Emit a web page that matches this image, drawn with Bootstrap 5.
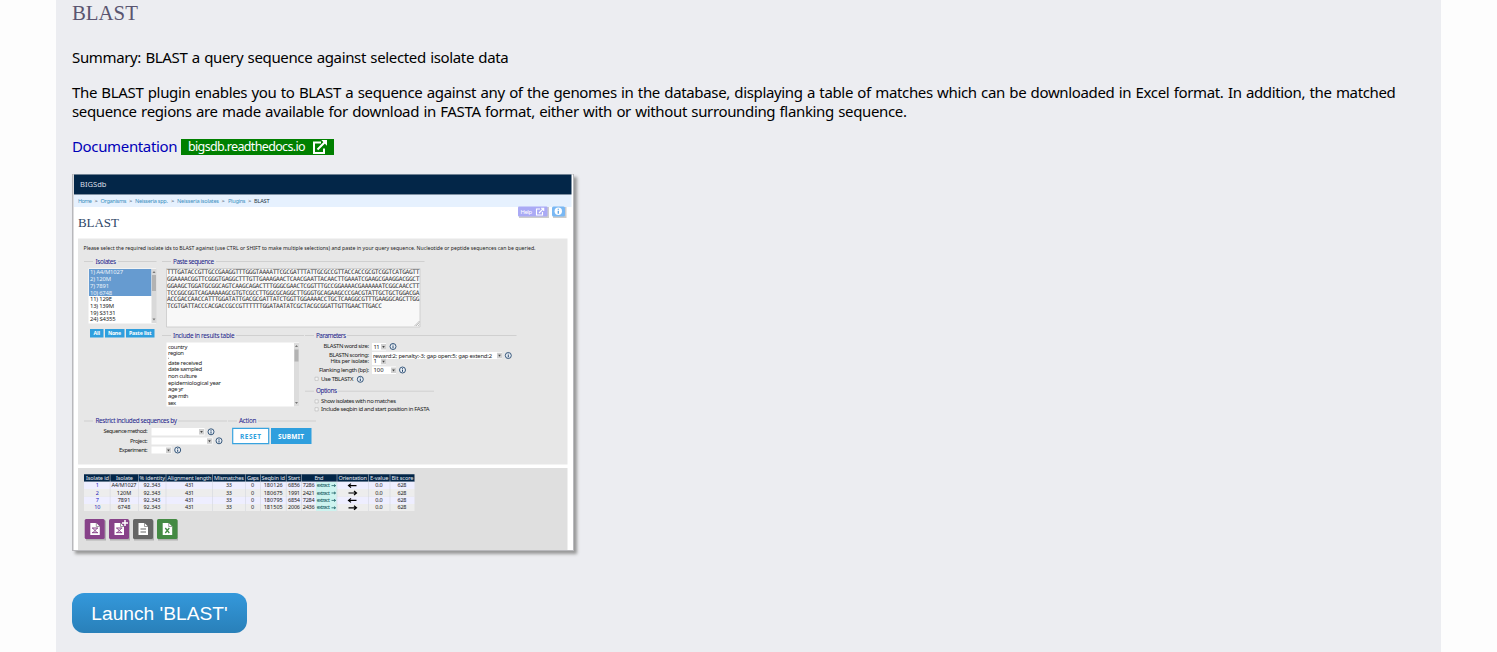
<!DOCTYPE html>
<html lang="en">
<head>
<meta charset="utf-8">
<meta name="viewport" content="width=device-width, initial-scale=1">
<title>BLAST</title>
<link href="https://cdn.jsdelivr.net/npm/bootstrap@5.3.0/dist/css/bootstrap.min.css" rel="stylesheet">
<style>
body{background:#fdfdfd;color:#000;font-family:"Noto Sans","Open Sans",sans-serif;font-size:15px;line-height:19px;letter-spacing:-.35px;word-spacing:.8px;overflow:hidden}
.panel{background:#ecedf1;margin:0 56px;padding:0 16px;height:652px}
h1{font:20.8px/26px "Liberation Serif",serif;color:#5a5570;letter-spacing:0;margin:0 0 22px}
.intro{margin-bottom:16px;white-space:nowrap}
.doc-link{color:#0000b8}
.site-tag{background:#008000;color:#fff;width:153px;height:16px;padding:0 7px;font-size:12.5px;line-height:16px;letter-spacing:-.65px}
.site-tag:hover{color:#fff}
.shot{display:block;margin-top:18px;box-shadow:3px 3px 3px #999}
.launch{margin-top:42px;width:175px;height:40px;border-radius:12px;border:0;background:linear-gradient(#3498db,#2980b9);color:#fff;font:19.2px/40px "Liberation Sans",sans-serif;letter-spacing:0;word-spacing:0;padding:1px 0 0}
.mono{font-family:"DejaVu Sans Mono",monospace;font-size:6.2px;fill:#333}
.ttl{fill:#22228a;font-size:6.4px}
</style>
</head>
<body>
<main class="panel">
<h1>BLAST</h1>
<p class="intro">Summary: BLAST a query sequence against selected isolate data</p>
<p class="intro">The BLAST plugin enables you to BLAST a sequence against any of the genomes in the database, displaying a table of matches which can be downloaded in Excel format. In addition, the matched<br>sequence regions are made available for download in FASTA format, either with or without surrounding flanking sequence.</p>
<div class="d-flex align-items-center">
<a class="doc-link text-decoration-none" href="#" style="width:109px">Documentation</a>
<a class="site-tag d-flex align-items-center justify-content-between text-decoration-none" href="#"><span>bigsdb.readthedocs.io</span>
<svg width="14" height="14" viewBox="0 0 14 14" fill="none" stroke="#fff" stroke-width="2"><path d="M8 2.500H1V13h10V8.500M4.500 9.500 12 2"/><path d="M8.300 0H14v5.700z" fill="#fff" stroke="none"/></svg></a>
</div>
<svg class="shot" width="502" height="377" viewBox="72 174 502 377" font-family="Noto Sans, sans-serif" font-size="5.9" letter-spacing="0" word-spacing="0" fill="#222">
<defs>
<g id="info"><circle r="3" fill="#e9eef4" stroke="#24476e" stroke-width=".9"/><path d="M0-.4V1.8M0-1.8V-1" stroke="#24476e" stroke-width="1"/></g>
<g id="arr"><path fill="#d0d0d0" d="M0 0h5v5.500H0z"/><path fill="#444" d="M1.200 2h2.600L2.500 4z"/></g>
<g id="doc"><path fill="#fff" d="M0 0h6l3.500 3.500V12H0z"/><path d="M6 0v3.500h3.500" fill="none" stroke="#777" stroke-width=".7"/></g>
</defs>
<path fill="#b8b8bc" d="M72 174h502v377H72z"/><path fill="#fff" d="M73.500 174.500h499.500v375.500H73.500z"/>
<path fill="#032648" d="M74 174.500h497.500V194H74z"/><path fill="#8192a4" d="M74 194h497.500v1H74z"/><path fill="#e6f1fe" d="M74 195h497.500v12H74z"/>
<text x="80" y="187" font-size="7.600" fill="#d8dfe6" textLength="26.500" lengthAdjust="spacingAndGlyphs">BIGSdb</text>
<g fill="#3c8fc0" font-size="5.600"><text x="78" y="202.700" textLength="14">Home</text><text x="100.500" y="202.700" textLength="26">Organisms</text><text x="135" y="202.700" textLength="33">Neisseria spp.</text><text x="177" y="202.700" textLength="42">Neisseria isolates</text><text x="228" y="202.700" textLength="17.500">Plugins</text><g fill="#234"><text x="94.500" y="202.700">&gt;</text><text x="129" y="202.700">&gt;</text><text x="171" y="202.700">&gt;</text><text x="221.500" y="202.700">&gt;</text><text x="248" y="202.700">&gt;</text><text x="254" y="202.700" textLength="15.500">BLAST</text></g></g>
<path fill="#aaa" opacity=".6" d="M519 207h30v11h-30zM553 207h13.500v11H553z"/>
<rect x="518" y="206.500" width="29.500" height="10" rx="1" fill="#aaaaf5"/><text x="520.500" y="214" fill="#fff" textLength="11.500">Help</text>
<path d="M540 209h-3.500v6h6v-3M539 213l4.500-4.500M541 208.300h2.700v2.700" fill="none" stroke="#fff" stroke-width="1.100"/>
<rect x="552" y="206.500" width="13" height="10" rx="1.500" fill="#79b8f4"/><circle cx="558.300" cy="211.300" r="3.700" fill="#fff"/><path d="M558.300 210.700v3M558.300 208.700v1.100" stroke="#5ba3e6" stroke-width="1.300"/>
<text x="78" y="227" font-family="Liberation Serif, serif" font-size="13" fill="#2e4566" textLength="41">BLAST</text>
<path fill="#e7e7e7" d="M78 238.500h489.500V464.500H78z"/><path fill="#dfdfdf" d="M78 468h489.500v82H78z"/>
<text x="83.500" y="249.700" textLength="452" lengthAdjust="spacingAndGlyphs">Please select the required isolate ids to BLAST against (use CTRL or SHIFT to make multiple selections) and paste in your query sequence. Nucleotide or peptide sequences can be queried.</text>
<path d="M84 261.500h9M118 261.500h38.500M162 261.500h9M216 261.500h208.500M162 335.500h9M236 335.500h68M305 335.500h9M347 335.500h169.500M305 391.200h9M338 391.200h96M84 421h9M178 421h49M228 421h9M258 421h58" stroke="#cacaca" stroke-width=".8"/>
<g class="ttl"><text x="95.500" y="263.500" textLength="20.500">Isolates</text><text x="173" y="263.500" textLength="41">Paste sequence</text><text x="173" y="337.500" textLength="61.500">Include in results table</text><text x="316" y="337.500" textLength="30">Parameters</text><text x="316" y="393" textLength="21">Options</text><text x="95.500" y="423" textLength="81.500">Restrict included sequences by</text><text x="239" y="423" textLength="17.500">Action</text></g>
<path fill="#fff" d="M88.500 268.500H156v55H88.500z"/><path fill="#669bd0" d="M89 269h62.500v27H89z"/><path fill="#d9d9d9" d="M151.500 269h5v54h-5z"/><path fill="#b3b3b3" d="M152 275h4v16h-4z"/>
<path fill="#777" d="M152.500 273l1.500-2 1.500 2zM152.500 318.500l1.500 2 1.500-2z"/>
<g fill="#e9f1f8"><text x="90" y="274.200" textLength="33">1) A4/M1027</text><text x="90" y="281" textLength="21">2) 120M</text><text x="90" y="287.700" textLength="19">7) 7891</text><text x="90" y="294.500" textLength="22">10) 6748</text></g>
<text x="90" y="301.200" textLength="22">11) 129E</text><text x="90" y="308" textLength="24">13) 139M</text><text x="90" y="314.700" textLength="25.500">19) S3131</text><text x="90" y="321.300" textLength="25.500">24) S4355</text>
<path d="M90 329h13.500v8.500H90zM105 329h19.500v8.500H105zM126 329h28.500v8.500H126z" fill="#2f9fde"/>
<g fill="#fff" font-weight="700" font-size="5.200"><text x="93.500" y="335.200" textLength="6.500">All</text><text x="108" y="335.200" textLength="13">None</text><text x="129" y="335.200" textLength="22.500">Paste list</text></g>
<path fill="#f8f8f8" stroke="#c4c4c4" stroke-width=".7" d="M166.500 268.500H420v58.500H166.500z"/><path d="M416 326l3.500-3.500M418 326l1.500-1.500M414.500 326l5-5" stroke="#888" stroke-width=".5"/>
<g class="mono"><text x="167" y="274.200" textLength="252.500">TTTGATACCGTTGCCGAAGGTTTGGGTAAAATTCGCGATTTATTGCGCCGTTACCACCGCGTCGGTCATGAGTT</text><text x="167" y="281" textLength="252.500">GGAAAACGGTTCGGGTGAGGCTTTGTTGAAAGAACTCAACGAATTACAACTTGAAATCGAAGCGAAGGACGGCT</text><text x="167" y="287.800" textLength="252.500">GGAAGCTGGATGCGGCAGTCAAGCAGACTTTGGGCGAACTCGGTTTGCCGGAAAACGAAAAAATCGGCAACCTT</text><text x="167" y="294.500" textLength="252.500">TCCGGCGGTCAGAAAAAGCGTGTCGCCTTGGCGCAGGCTTGGGTGCAGAAGCCCGACGTATTGCTGCTGGACGA</text><text x="167" y="301.200" textLength="252.500">ACCGACCAACCATTTGGATATTGACGCGATTATCTGGTTGGAAAACCTGCTCAAGGCGTTTGAAGGCAGCTTGG</text><text x="167" y="308" textLength="215">TCGTGATTACCCACGACCGCCGTTTTTTGGATAATATCGCTACGCGGATTGTTGAACTTGACC</text></g>
<path fill="#fff" d="M166.500 342.500H299V406.500H166.500z"/><path fill="#dcdcdc" d="M294 343h5v63.500h-5z"/><path fill="#b3b3b3" d="M294.500 349.500h4v12h-4z"/><path fill="#777" d="M295 347l1.500-2 1.500 2zM295 402l1.500 2 1.500-2z"/>
<text x="168" y="348.700" textLength="19.500">country</text><text x="168" y="355.300" textLength="16">region</text><text x="168" y="364.600" textLength="34">date received</text><text x="168" y="371.200" textLength="34">date sampled</text><text x="168" y="378" textLength="29">non culture</text><text x="168" y="384.700" textLength="53">epidemiological year</text><text x="168" y="391.300" textLength="15.500">age yr</text><text x="168" y="398" textLength="20.500">age mth</text><text x="168" y="404.700" textLength="8">sex</text>
<path d="M168 358.300h1" stroke="#555" stroke-width=".6"/>
<text x="323.500" y="348.200" textLength="45.500">BLASTN word size:</text><text x="329" y="357.300" textLength="40">BLASTN scoring:</text><text x="330.500" y="362.500" textLength="38.500">Hits per isolate:</text><text x="319" y="371.700" textLength="50">Flanking length (bp):</text><text x="321" y="380.700" textLength="32.500">Use TBLASTX</text><text x="321" y="403.400" textLength="75">Show isolates with no matches</text><text x="321" y="411.300" textLength="108.500">Include seqbin id and start position in FASTA</text>
<path fill="#fff" d="M372 343h14v7.500h-14zM372 352h130v7h-130zM372 358h14v7h-14zM372 366.500h24v7.500h-24z"/>
<use href="#arr" x="381" y="344"/><use href="#arr" x="497" y="352.800"/><use href="#arr" x="381" y="358.800"/><use href="#arr" x="391" y="367.500"/>
<text x="373.500" y="348.700" textLength="6">11</text><text x="373" y="357.600" textLength="119">reward:2; penalty:-3; gap open:5; gap extend:2</text><text x="373.500" y="363.200">1</text><text x="373.500" y="372.200" textLength="10">100</text>
<use href="#info" x="393" y="346.500"/><use href="#info" x="508.300" y="355.500"/><use href="#info" x="402.500" y="370"/><use href="#info" x="360.300" y="379.300"/>
<path fill="#f5f5f5" stroke="#aaa" stroke-width=".5" d="M315 377.200h3.200v3.200H315zM315 399.800h3.200v3.200H315zM315 407.700h3.200v3.200H315z"/>
<text x="103.500" y="433.400" textLength="44">Sequence method:</text><text x="130" y="442.600" textLength="17.500">Project:</text><text x="119" y="452" textLength="28.500">Experiment:</text>
<path fill="#fff" d="M151.500 428h53v7.500h-53zM151.500 437.500h61v7h-61zM151.500 446.500h20v7h-20z"/><use href="#arr" x="199" y="429"/><use href="#arr" x="207" y="438.300"/><use href="#arr" x="166" y="447.500"/><use href="#info" x="211" y="431.800"/><use href="#info" x="219" y="440.800"/><use href="#info" x="177.700" y="450"/>
<path fill="#fff" stroke="#38a3df" stroke-width="1.200" d="M232.700 428.300h36v15.400h-36z"/><path fill="#2f9fde" d="M271 428h40.500v16H271z"/><text x="240" y="438.600" font-size="6.500" font-weight="700" fill="#2f9fde" textLength="21">RESET</text><text x="278" y="438.600" font-size="6.500" font-weight="700" fill="#fff" textLength="26">SUBMIT</text>
<path fill="#032648" d="M84 474.300h330.500v7.400H84z"/><path fill="#eef" d="M84 481.700h330.500v7.400H84zM84 496.500h330.500v7.400H84z"/><path fill="#ededed" d="M84 489.100h330.500v7.400H84zM84 503.900h330.500v7.100H84z"/><path fill="#cdf3ef" d="M316 482h20.700v29H316z"/>
<path d="M110.200 474.300V511M138.500 474.300V511M166 474.300V511M212.500 474.300V511M245.500 474.300V511M260.500 474.300V511M286.300 474.300V511M301.500 474.300V511M337 474.300V511M368.500 474.300V511M390 474.300V511" stroke="#cfd3da" stroke-width=".5"/>
<g fill="#e5eaf0" font-size="5.600"><text x="86" y="479.900" textLength="23">Isolate id</text><text x="116" y="479.900" textLength="17">Isolate</text><text x="139.500" y="479.900" textLength="25.500">% identity</text><text x="167.500" y="479.900" textLength="44">Alignment length</text><text x="214" y="479.900" textLength="30">Mismatches</text><text x="247" y="479.900" textLength="12">Gaps</text><text x="261.500" y="479.900" textLength="23.500">Seqbin id</text><text x="288" y="479.900" textLength="12">Start</text><text x="314.500" y="479.900" textLength="9">End</text><text x="338.500" y="479.900" textLength="28.500">Orientation</text><text x="370" y="479.900" textLength="18.500">E-value</text><text x="391.500" y="479.900" textLength="22">Bit score</text></g>
<g id="rows" font-size="5.500"></g>
<path fill="#999" opacity=".65" d="M86 520.500h20v20H86zM110 520.500h20v20h-20zM134 520.500h20v20h-20zM158 520.500h20v20h-20z"/>
<rect x="84.700" y="519" width="20" height="20" rx="1.500" fill="#874289"/><rect x="109" y="519" width="20" height="20" rx="1.500" fill="#874289"/><rect x="133" y="519" width="20" height="20" rx="1.500" fill="#666"/><rect x="157" y="519" width="20.500" height="20" rx="1.500" fill="#448a43"/>
<use href="#doc" x="90.300" y="523"/><use href="#doc" x="114.500" y="523"/><use href="#doc" x="138.500" y="523"/><use href="#doc" x="162.700" y="523"/>
<path d="M92 528h6M92.500 528l5 5M97.500 528l-5 5M92 532.700h6M116.200 528h6M116.700 528l5 5M121.700 528l-5 5M116.200 532.700h6" stroke="#874289" stroke-width="1"/><path d="M140.500 529h5.500M140.500 532h5.500" stroke="#666" stroke-width="1.100"/><path d="M165.300 528l4 5M169.300 528l-4 5" stroke="#448a43" stroke-width="1.300"/><path d="M125 520v6M122 523h6" stroke="#fff" stroke-width="1.500"/>
</svg>
<button class="btn launch d-block" type="button">Launch 'BLAST'</button>
</main>
<script>
const data=[["1","A4/M1027","180126","6856","7286",0],["2","120M","180675","1991","2421",1],["7","7891","180795","6854","7284",0],["10","6748","181505","2006","2436",1]];
document.getElementById('rows').innerHTML=data.map((r,i)=>{
 const y=487.2+i*7.4,t=(s,x,c='')=>`<text x="${x}" y="${y}" text-anchor="middle" ${c}>${s}</text>`;
 const a=r[5]?'M348.500 0h8M354-2l2.500 2-2.500 2':'M356.500 0h-8M351-2l-2.500 2 2.500 2';
 return t(r[0],97.3,'fill="#2222bb"')+t(r[1],124,i?'':'textLength="25"')+t('92.343',152,'textLength="17"')+t('431',189.5,'textLength="9"')+t('33',229,'textLength="6"')+t('0',252.5)+t(r[2],273.2,'textLength="19"')+t(r[3],294,'textLength="12"')+t(r[4],308.7,'textLength="12"')+t('extract',323.3,'textLength="13" font-size="5" fill="#064d55"')+`<path transform="translate(0 ${y-1.6})" d="M331.500 0h4M334-1.200l1.500 1.200-1.500 1.200" fill="none" stroke="#064d55" stroke-width=".7"/><path transform="translate(0 ${y-1.6})" d="${a}" fill="none" stroke="#000" stroke-width="1.2"/>`+t('0.0',379,'textLength="7.500"')+t('628',402,'textLength="9"');
}).join('');
</script>
<script src="https://cdn.jsdelivr.net/npm/bootstrap@5.3.0/dist/js/bootstrap.bundle.min.js"></script>
</body>
</html>
